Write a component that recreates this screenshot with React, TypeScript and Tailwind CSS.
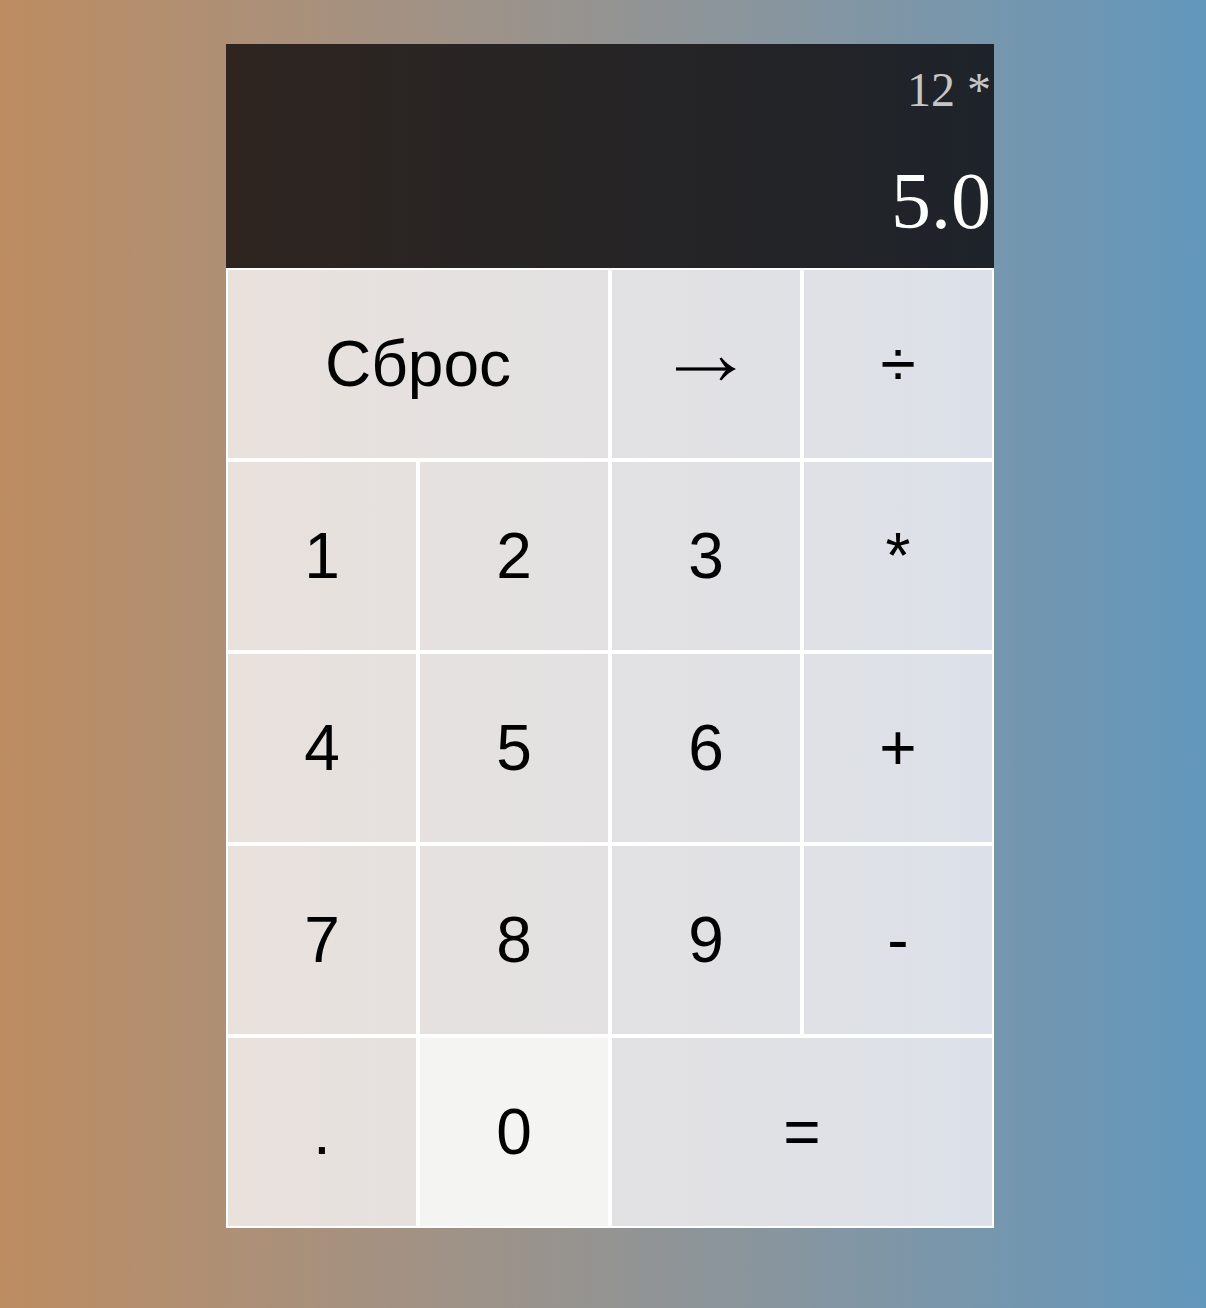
import React from 'react';

interface KeyProps {
  label: React.ReactNode;
  wide?: boolean;
  active?: boolean;
}

function Key({ label, wide, active }: KeyProps) {
  return (
    <button
      className={`h-[192px] border-2 border-white flex items-center justify-center text-[64px] text-black leading-none font-['Liberation_Sans',Arial,sans-serif] ${
        wide ? 'col-span-2' : ''
      } ${active ? 'bg-[#f4f4f3]' : 'bg-transparent'}`}
    >
      {label}
    </button>
  );
}

function ArrowRight() {
  return (
    <svg width="60" height="24" viewBox="0 0 60 24" className="mt-[10px]" aria-label="→">
      <rect x="0" y="10.4" width="56" height="3.2" fill="#000" />
      <path d="M60 12 Q52 8.5 45.5 0.5 L43.5 1.5 Q47.5 8.5 51 12 Q47.5 15.5 43.5 22.5 L45.5 23.5 Q52 15.5 60 12 Z" fill="#000" />
    </svg>
  );
}

export default function App() {
  return (
    <div className="min-h-[1308px] w-full bg-gradient-to-r from-[#bd8c61] to-[#6297bc] pt-[44px] pl-[14px]">
      <div className="mx-auto w-[768px]">
        <div className="h-[224px] bg-gradient-to-r from-[#2e2520] to-[#1e232a] flex flex-col items-end justify-between pr-[3px] pt-[22px] pb-[27px] font-['Liberation_Serif','Times_New_Roman',serif]">
          <div className="text-[48px] leading-none text-[#c6c6c6]">12 *</div>
          <div className="text-[80px] leading-none text-white">5.0</div>
        </div>
        <div className="grid grid-cols-4 bg-gradient-to-r from-[#e9e1dc] to-[#dce1e9]">
          <Key label="Сброс" wide />
          <Key label={<ArrowRight />} />
          <Key label="÷" />
          <Key label="1" />
          <Key label="2" />
          <Key label="3" />
          <Key label="*" />
          <Key label="4" />
          <Key label="5" />
          <Key label="6" />
          <Key label="+" />
          <Key label="7" />
          <Key label="8" />
          <Key label="9" />
          <Key label="-" />
          <Key label="." />
          <Key label="0" active />
          <Key label="=" wide />
        </div>
      </div>
    </div>
  );
}
